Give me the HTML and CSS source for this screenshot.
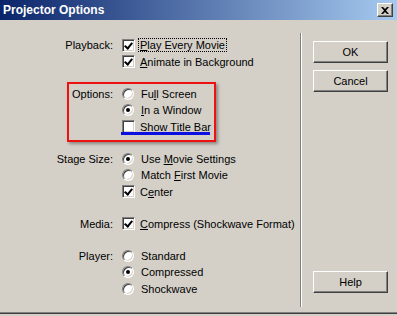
FILE: index.html
```html
<!DOCTYPE html>
<html lang="en">
<head>
    <meta charset="UTF-8">
    <title>Projector Options</title>
    <link rel="stylesheet" href="styles.css">
</head>
<body>
    <div class="window">
        <div class="titlebar">
            <span class="title">Projector Options</span>
            <div class="close">
                <svg width="8" height="7" viewBox="0 0 8 7"><path d="M0 0h2l2 2 2-2h2L5 3.5 8 7H6L4 5 2 7H0l3-3.5z" fill="#000"/></svg>
            </div>
        </div>

        <div class="body">
            <div class="form">
                <!-- Playback -->
                <div class="group">
                    <div class="label">Playback:</div>
                    <div class="options">
                        <div class="opt"><span class="check on"></span><span class="text focus"><u>P</u>lay Every Movie</span></div>
                        <div class="opt"><span class="check on"></span><span class="text"><u>A</u>nimate in Background</span></div>
                    </div>
                </div>

                <!-- Options -->
                <div class="group">
                    <div class="label">Options:</div>
                    <div class="options">
                        <div class="opt"><span class="radio"></span><span class="text">Fu<u>l</u>l Screen</span></div>
                        <div class="opt"><span class="radio on"></span><span class="text"><u>I</u>n a Window</span></div>
                        <div class="opt"><span class="check"></span><span class="text">Show Title Bar</span></div>
                    </div>
                </div>

                <!-- Stage Size -->
                <div class="group">
                    <div class="label">Stage Size:</div>
                    <div class="options">
                        <div class="opt"><span class="radio on"></span><span class="text">Use <u>M</u>ovie Settings</span></div>
                        <div class="opt"><span class="radio"></span><span class="text">Match <u>F</u>irst Movie</span></div>
                        <div class="opt"><span class="check on"></span><span class="text">C<u>e</u>nter</span></div>
                    </div>
                </div>

                <!-- Media -->
                <div class="group">
                    <div class="label">Media:</div>
                    <div class="options">
                        <div class="opt"><span class="check on"></span><span class="text"><u>C</u>ompress (Shockwave Format)</span></div>
                    </div>
                </div>

                <!-- Player -->
                <div class="group">
                    <div class="label">Player:</div>
                    <div class="options">
                        <div class="opt"><span class="radio"></span><span class="text">Standard</span></div>
                        <div class="opt"><span class="radio on"></span><span class="text">Compressed</span></div>
                        <div class="opt"><span class="radio"></span><span class="text">Shockwave</span></div>
                    </div>
                </div>
            </div>

            <div class="buttons">
                <div class="btn">OK</div>
                <div class="btn">Cancel</div>
                <div class="btn help">Help</div>
            </div>
        </div>

        <!-- annotation drawn over the dialog -->
        <div class="mark-box"></div>
        <div class="mark-line"></div>
    </div>
</body>
</html>
```

FILE: styles.css
```css
body {
    margin: 0;
    padding: 0;
    background-color: #d4d0c8;
    font-family: "Liberation Sans", Arial, sans-serif;
    font-size: 11px;
    color: #000;
}
.window {
    position: relative;
    width: 397px;
    height: 314px;
    box-sizing: border-box;
    background-color: #d4d0c8;
    border-bottom: 1px solid #404040;
    box-shadow: inset 0 -1px #808080;
    overflow: hidden;
}
.titlebar {
    display: flex;
    align-items: center;
    justify-content: space-between;
    height: 20px;
    padding: 0 4px 0 3px;
    background: linear-gradient(to right, #0a246a, #a6caf0);
}
.title {
    color: #fff;
    font-weight: bold;
    font-size: 12px;
    margin-top: -1px;
}
.close {
    display: flex;
    align-items: center;
    justify-content: center;
    width: 16px;
    height: 14px;
    box-sizing: border-box;
    background-color: #d4d0c8;
    border: 1px solid;
    border-color: #fff #404040 #404040 #fff;
    box-shadow: inset -1px -1px #808080;
}
.body {
    display: flex;
    height: 292px;
}
.form {
    width: 300px;
    padding-top: 17px;
    box-sizing: border-box;
}
.group {
    display: flex;
    margin-bottom: 15.5px;
}
.label {
    width: 113px;
    margin-right: 9px;
    text-align: right;
    line-height: 16.5px;
}
.opt {
    display: flex;
    align-items: center;
    height: 16.5px;
}
.text u {
    text-decoration: underline;
}
.focus {
    outline: 1px dotted #000;
    padding: 0 1px;
    margin-left: -1px;
}
.check {
    position: relative;
    width: 13px;
    height: 13px;
    box-sizing: border-box;
    margin-right: 5px;
    background-color: #fff;
    border: 1px solid;
    border-color: #808080 #fff #fff #808080;
    box-shadow: inset 1px 1px #404040, inset -1px -1px #d4d0c8;
}
.check.on::after {
    content: "";
    position: absolute;
    left: 3px;
    top: 1px;
    width: 3px;
    height: 6px;
    border: solid #000;
    border-width: 0 2px 2px 0;
    transform: rotate(40deg);
    transform-origin: center;
}
.radio {
    position: relative;
    width: 12px;
    height: 12px;
    box-sizing: border-box;
    margin-right: 7px;
    border-radius: 50%;
    background-color: #fff;
    border: 1px solid;
    border-color: #808080 #fff #fff #808080;
    box-shadow: inset 1px 1px #404040, inset -1px -1px #d4d0c8;
}
.radio.on::after {
    content: "";
    position: absolute;
    left: 3px;
    top: 3px;
    width: 4px;
    height: 4px;
    border-radius: 50%;
    background-color: #000;
}
.buttons {
    flex: 1;
    display: flex;
    flex-direction: column;
    gap: 7px;
    margin: 13px 0 5px;
    padding: 8px 0 14px 12px;
    border-left: 1px solid #808080;
    box-shadow: inset 1px 0 #fff;
}
.btn {
    width: 75px;
    height: 22px;
    box-sizing: border-box;
    display: flex;
    align-items: center;
    justify-content: center;
    border: 1px solid;
    border-color: #fff #404040 #404040 #fff;
    box-shadow: inset -1px -1px #808080;
}
.btn.help {
    margin-top: auto;
}
.mark-box {
    position: absolute;
    left: 67px;
    top: 82px;
    width: 149px;
    height: 60px;
    box-sizing: border-box;
    border: 2px solid #ee1111;
    box-shadow: 2px 2px 3px rgba(0, 0, 0, 0.35);
}
.mark-line {
    position: absolute;
    left: 121px;
    top: 132px;
    width: 89px;
    height: 3px;
    background-color: #0a10e0;
}
```
